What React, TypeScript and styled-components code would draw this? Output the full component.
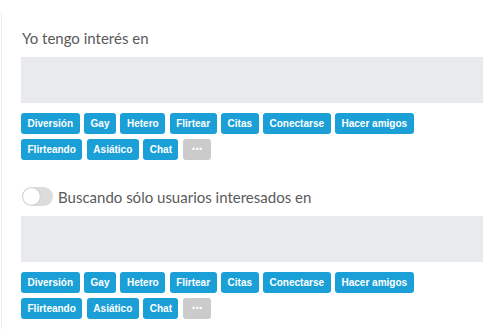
import styled, { createGlobalStyle } from "styled-components";

const GlobalStyle = createGlobalStyle`
  body {
    margin: 0;
    background: #ffffff;
    font-family: "Lato", "Liberation Sans", sans-serif;
  }
`;

const tags = [
  "Diversión",
  "Gay",
  "Hetero",
  "Flirtear",
  "Citas",
  "Conectarse",
  "Hacer amigos",
  "Flirteando",
  "Asiático",
  "Chat",
];

const TagGroup = () => (
  <Tags>
    {tags.map((t) => (
      <Tag key={t}>{t}</Tag>
    ))}
    <More>···</More>
  </Tags>
);

const App = () => {
  return (
    <>
      <GlobalStyle />
      <Panel>
        <Section>
          <Title>Yo tengo interés en</Title>
          <InputBox />
          <TagGroup />
        </Section>
        <Section>
          <ToggleRow>
            <Toggle>
              <Knob />
            </Toggle>
            <Label>Buscando sólo usuarios interesados en</Label>
          </ToggleRow>
          <InputBox />
          <TagGroup />
        </Section>
      </Panel>
    </>
  );
};

const Panel = styled.div`
  margin: 13px 0 0 1px;
  border-left: 1px solid #ededed;
  height: 316px;
  padding: 16px 0 0 19px;
  box-sizing: border-box;
`;

const Section = styled.div`
  width: 462px;
  margin-bottom: 27px;
`;

const Title = styled.div`
  font-size: 15px;
  color: #5a5a5a;
  line-height: 18px;
  height: 18px;
  margin-left: 1px;
`;

const InputBox = styled.div`
  margin-top: 10px;
  height: 46px;
  background: #e8eaed;
`;

const Tags = styled.div`
  display: flex;
  flex-wrap: wrap;
  gap: 5px 4.5px;
  margin-top: 10px;
  width: 420px;
`;

const Tag = styled.span`
  height: 21px;
  line-height: 21px;
  padding: 0 6.5px;
  border-radius: 3px;
  background: #1a9fd7;
  color: #ffffff;
  font-family: "Liberation Sans", sans-serif;
  font-size: 10px;
  font-weight: 700;
`;

const More = styled(Tag)`
  background: #cbcbcb;
  width: 28px;
  padding: 0;
  text-align: center;
  font-size: 14px;
  letter-spacing: -1px;
`;

const ToggleRow = styled.div`
  display: flex;
  align-items: center;
  gap: 5px;
  height: 19px;
`;

const Toggle = styled.div`
  width: 31px;
  height: 19px;
  border-radius: 10px;
  background: #dcdcdc;
  display: flex;
  align-items: center;
  padding-left: 1px;
  box-sizing: border-box;
  margin-left: 1px;
`;

const Knob = styled.div`
  width: 17px;
  height: 17px;
  border-radius: 50%;
  background: #ffffff;
  box-shadow: 0 0 1px rgba(0, 0, 0, 0.3);
`;

const Label = styled.span`
  font-size: 15px;
  color: #5a5a5a;
`;

export default App;
